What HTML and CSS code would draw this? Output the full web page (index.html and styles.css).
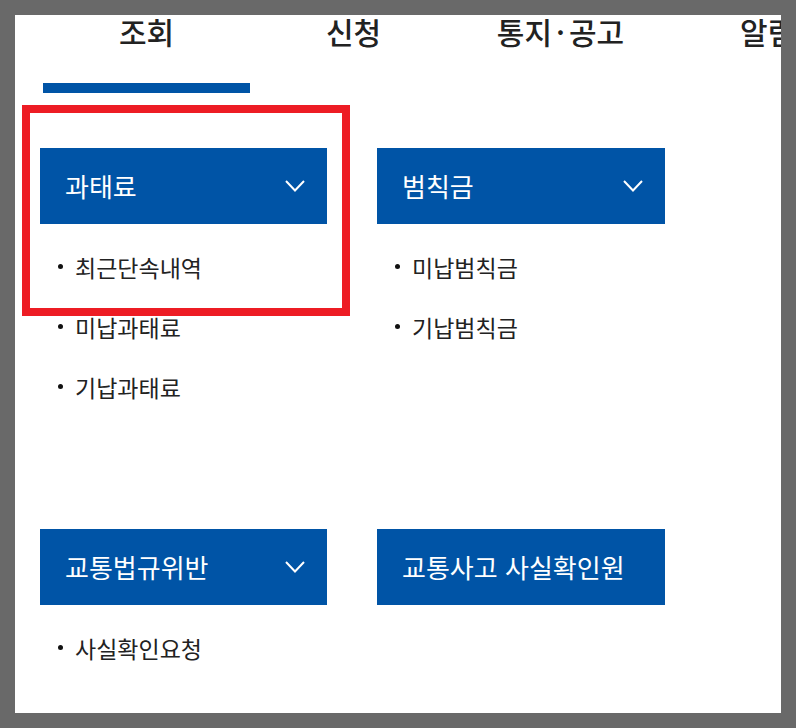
FILE: index.html
```html
<!DOCTYPE html>
<html lang="ko">

<head>
    <meta charset="UTF-8">
    <meta name="viewport" content="width=device-width, initial-scale=1.0">
    <title>조회</title>
    <link rel="stylesheet" href="styles.css">
</head>

<body>
    <div class="panel">
        <ul class="tabs">
            <li class="tab active">조회</li>
            <li class="tab">신청</li>
            <li class="tab">통지<span class="dot">·</span>공고</li>
            <li class="tab">알림</li>
        </ul>

        <div class="menu-grid">
            <div class="menu-card">
                <div class="menu-head">
                    <span>과태료</span>
                    <svg class="chevron" width="20" height="12" viewBox="0 0 20 12">
                        <polyline points="1,1 10,10.5 19,1" />
                    </svg>
                </div>
                <ul class="menu-list">
                    <li>최근단속내역</li>
                    <li>미납과태료</li>
                    <li>기납과태료</li>
                </ul>
            </div>

            <div class="menu-card">
                <div class="menu-head">
                    <span>범칙금</span>
                    <svg class="chevron" width="20" height="12" viewBox="0 0 20 12">
                        <polyline points="1,1 10,10.5 19,1" />
                    </svg>
                </div>
                <ul class="menu-list">
                    <li>미납범칙금</li>
                    <li>기납범칙금</li>
                </ul>
            </div>

            <div class="menu-card">
                <div class="menu-head">
                    <span>교통법규위반</span>
                    <svg class="chevron" width="20" height="12" viewBox="0 0 20 12">
                        <polyline points="1,1 10,10.5 19,1" />
                    </svg>
                </div>
                <ul class="menu-list">
                    <li>사실확인요청</li>
                </ul>
            </div>

            <div class="menu-card">
                <div class="menu-head">
                    <span>교통사고 사실확인원</span>
                </div>
            </div>
        </div>

        <!-- highlight box -->
        <div class="highlight"></div>
    </div>
</body>

</html>
```

FILE: styles.css
```css
body {
    margin: 0;
    padding: 15px;
    background-color: #696969;
    font-family: "Noto Sans CJK KR", "Noto Sans", sans-serif;
    color: #222;
}

.panel {
    position: relative;
    width: 766px;
    height: 698px;
    overflow-x: clip;
    overflow-y: visible;
    background-color: #fff;
}

/* top tabs */
.tabs {
    display: flex;
    list-style: none;
    margin: 0;
    padding: 0 0 0 28px;
}

.tab {
    flex: 0 0 207px;
    height: 34px;
    padding-bottom: 34px;
    border-bottom: 10px solid transparent;
    font-size: 30px;
    font-weight: 500;
    line-height: 32px;
    text-align: center;
    white-space: nowrap;
    color: #222;
}

.tab .dot {
    margin: 0 4px;
}

.tab.active {
    border-bottom-color: #0054a6;
}

/* menu cards */
.menu-grid {
    display: grid;
    grid-template-columns: 287px 288px;
    grid-template-rows: 270px auto;
    column-gap: 50px;
    row-gap: 111px;
    margin: 55px 0 0 25px;
}

.menu-head {
    display: flex;
    align-items: center;
    justify-content: space-between;
    height: 76px;
    padding: 0 22px 0 25px;
    background-color: #0054a6;
    color: #fff;
    font-size: 26px;
    line-height: 1;
}

.chevron {
    fill: none;
    stroke: #fff;
    stroke-width: 2;
}

.menu-list {
    list-style: none;
    margin: 0;
    padding: 13px 0 0 20px;
}

.menu-list li {
    position: relative;
    padding-left: 15px;
    font-size: 23px;
    line-height: 60px;
    color: #222;
}

.menu-list li::before {
    content: "";
    position: absolute;
    left: -2px;
    top: 27px;
    width: 5px;
    height: 5px;
    border-radius: 50%;
    background-color: #111;
}

.highlight {
    position: absolute;
    left: 7px;
    top: 90px;
    width: 312px;
    height: 195px;
    border: 8px solid #ed1c24;
}
```
